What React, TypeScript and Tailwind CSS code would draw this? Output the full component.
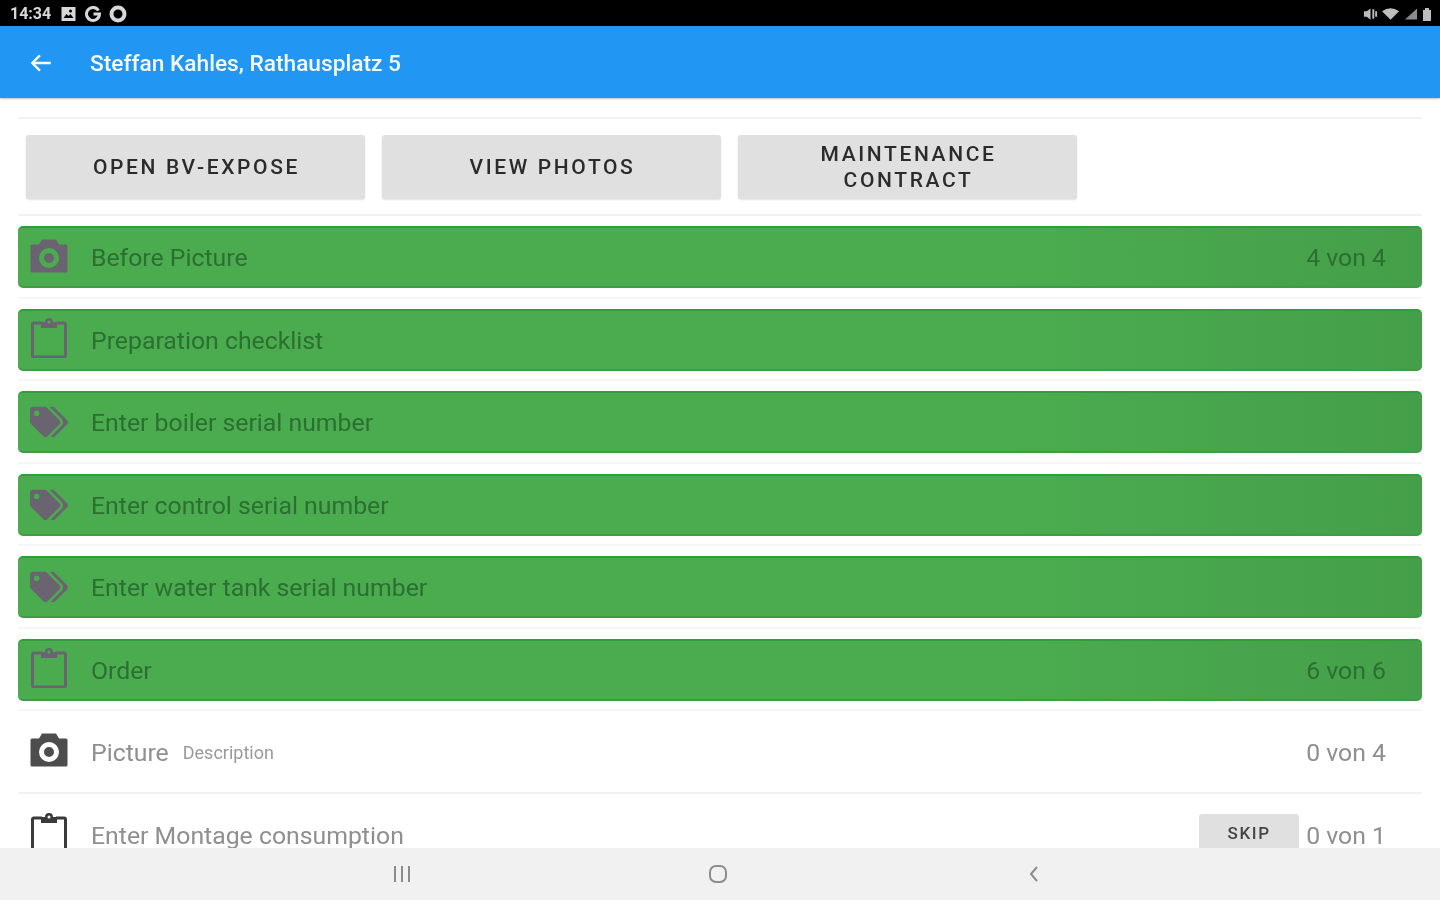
import React from "react";
import { FaTags } from "react-icons/fa";

const Camera = ({ className }: { className: string }) => (
  <svg viewBox="0 0 38 34" className={className} aria-hidden="true">
    <path
      fillRule="evenodd"
      fill="currentColor"
      d="M12 0.5h14l3 5h7a1.5 1.5 0 0 1 1.5 1.5v25a1.5 1.5 0 0 1-1.5 1.5H2A1.5 1.5 0 0 1 .5 32V7A1.5 1.5 0 0 1 2 5.5h7zM19 9a10 10 0 1 0 0 20a10 10 0 0 0 0-20zm0 5a5 5 0 1 1 0 10a5 5 0 0 1 0-10z"
    />
  </svg>
);

const Clipboard = ({ className }: { className: string }) => (
  <svg viewBox="0 0 36 40" className={className} fill="none" aria-hidden="true">
    <path d="M11 5H3a1.5 1.5 0 0 0-1.5 1.5v31A1.5 1.5 0 0 0 3 39h30a1.5 1.5 0 0 0 1.5-1.5v-31A1.5 1.5 0 0 0 33 5h-8" stroke="currentColor" strokeWidth="3" />
    <path fillRule="evenodd" fill="currentColor" d="M14 4a4 4 0 0 1 8 0h4v6H10V4zM18 2.5a1.5 1.5 0 1 0 0 3a1.5 1.5 0 0 0 0-3z" />
  </svg>
);

const Tags = ({ className }: { className: string }) => <FaTags className={className} />;

type Row = { icon: "camera" | "clip" | "tag"; label: string; count?: string };

const greenRows: Row[] = [
  { icon: "camera", label: "Before Picture", count: "4 von 4" },
  { icon: "clip", label: "Preparation checklist" },
  { icon: "tag", label: "Enter boiler serial number" },
  { icon: "tag", label: "Enter control serial number" },
  { icon: "tag", label: "Enter water tank serial number" },
  { icon: "clip", label: "Order", count: "6 von 6" },
];

const RowIcon = ({ icon, tone }: { icon: Row["icon"]; tone: string }) => (
  <div className={`flex h-[40px] w-[38px] shrink-0 items-center justify-center ${tone}`}>
    {icon === "camera" && <Camera className="mb-[2px] h-[34px] w-[38px]" />}
    {icon === "clip" && <Clipboard className="mb-[3px] h-[40px] w-[36px]" />}
    {icon === "tag" && <Tags className="h-[38px] w-[38px]" />}
  </div>
);

const Btn = ({ children }: { children: React.ReactNode }) => (
  <button className="flex h-[64px] w-[339px] items-center justify-center rounded-[3px] bg-[#e0e0e0] pl-[2px] text-center text-[21px] font-medium uppercase leading-[26px] tracking-[0.125em] text-[#2b2b2b] shadow-[0_1px_2px_rgba(0,0,0,0.12)]">
    {children}
  </button>
);

export default function App() {
  return (
    <div className="flex h-[900px] w-[1440px] flex-col overflow-hidden bg-white font-['Roboto',sans-serif] blur-[0.7px]">
      {/* status bar */}
      <div className="flex h-[26px] shrink-0 items-center justify-between bg-black pl-[10px] pr-[8px] pt-[2px] text-[#d8d8d8]">
        <div className="flex items-center gap-[8px]">
          <span className="w-[42px] whitespace-nowrap text-[16px] font-bold">14:34</span>
          <svg viewBox="0 0 16 16" className="h-[16px] w-[17px]" aria-hidden="true">
            <path fill="currentColor" fillRule="evenodd" d="M1 1h14v14H1zM3 12h10l-3-4-2 2-2-2zM10 3.5a1.5 1.5 0 1 0 0 3a1.5 1.5 0 0 0 0-3z" />
          </svg>
          <svg viewBox="0 0 16 16" className="h-[16px] w-[16px]" aria-hidden="true">
            <path fill="none" stroke="currentColor" strokeWidth="3" d="M13.5 4.5A6.5 6.5 0 1 0 14.5 8H8.5" />
          </svg>
          <svg viewBox="0 0 18 18" className="h-[18px] w-[18px]" aria-hidden="true">
            <circle cx="9" cy="9" r="6.5" fill="none" stroke="currentColor" strokeWidth="4" />
          </svg>
        </div>
        <div className="flex items-center gap-[4px] text-[#bdbdbd]">
          <svg viewBox="0 0 16 14" className="h-[14px] w-[15px]" aria-hidden="true">
            <path fill="currentColor" d="M1 4h3l4-3v12l-4-3H1zM10 2h2v10h-2zM13 4h2v6h-2z" />
          </svg>
          <svg viewBox="0 0 20 14" className="h-[14px] w-[19px]" aria-hidden="true">
            <path fill="currentColor" d="M0 4Q9-2 18 4L9 13z" />
          </svg>
          <svg viewBox="0 0 14 14" className="h-[14px] w-[13px]" aria-hidden="true">
            <path fill="#8a8a8a" d="M0 13L13 1v12z" />
          </svg>
          <svg viewBox="0 0 10 14" className="h-[14px] w-[10px]" aria-hidden="true">
            <path fill="currentColor" d="M3 1h4v2h2v11H1V3h2z" />
          </svg>
        </div>
      </div>

      {/* app bar */}
      <header className="flex h-[72px] shrink-0 items-center bg-[#2196f3] shadow-[0_1px_2px_rgba(0,0,0,0.25)]">
        <svg viewBox="0 0 24 24" className="ml-[28px] mt-[2px] h-[26px] w-[26px] text-white" aria-hidden="true">
          <path fill="none" stroke="currentColor" strokeWidth="2.2" d="M21 12H4M11 5l-7 7 7 7" />
        </svg>
        <h1 className="ml-[36px] pt-[4px] text-[22.7px] font-medium text-[#f4faff]">Steffan Kahles, Rathausplatz 5</h1>
      </header>

      {/* content */}
      <main className="min-h-0 flex-1 overflow-hidden px-[18px] pt-[19px]">
        <div className="h-[99px] border-y-2 border-[#f2f2f2] px-[8px] pt-[16px]">
          <div className="flex gap-[17px]">
            <Btn>Open BV-Expose</Btn>
            <Btn>View photos</Btn>
            <Btn>
              Maintenance
              <br />
              contract
            </Btn>
          </div>
        </div>

        {greenRows.map((r, i) => (
          <div key={i} className="h-[82.5px] border-b-2 border-[#f6f6f6] pt-[10px]">
            <div className="flex h-[62px] items-center rounded-[5px] border-t-2 border-b-2 border-t-[#2e9e38] border-b-[#3f9c44] bg-gradient-to-r from-[#4bac4f] from-70% to-[#459f4a] pl-[12px] pr-[36px] text-[24.8px] text-[#2b6f31]">
              <RowIcon icon={r.icon} tone="text-[#6a6370]" />
              <span className="ml-[23px] flex-1 pt-[2px]">{r.label}</span>
              {r.count && <span className="pt-[2px]">{r.count}</span>}
            </div>
          </div>
        ))}

        <div className="flex h-[82.5px] items-center border-b-2 border-[#f2f2f2] pl-[12px] pr-[36px] text-[24.8px] text-[#8f8f8f]">
          <RowIcon icon="camera" tone="text-[#4d4d4d]" />
          <span className="ml-[23px] pt-[2px]">Picture</span>
          <span className="ml-[14px] flex-1 pt-[2px] text-[18px] text-[#9a9a9a]">Description</span>
          <span className="pt-[2px]">0 von 4</span>
        </div>

        <div className="flex h-[82px] items-center pl-[12px] pr-[36px] text-[24.8px] text-[#8f8f8f]">
          <RowIcon icon="clip" tone="text-[#3a3a3a]" />
          <span className="ml-[23px] flex-1 pt-[2px]">Enter Montage consumption</span>
          <span className="mr-[7px] mt-[2px] flex h-[44px] w-[100px] items-center justify-center rounded-[3px] bg-[#e0e0e0] pb-[4px] text-[17px] font-medium tracking-[0.1em] text-[#444444]">SKIP</span>
          <span className="pt-[2px]">0 von 1</span>
        </div>
      </main>

      {/* navigation bar */}
      <nav className="flex h-[52px] shrink-0 items-center bg-[#f1f1f1] pl-[392px] text-[#8c8c8c]">
        <svg viewBox="0 0 20 16" className="h-[16px] w-[20px]" aria-hidden="true">
          <path stroke="currentColor" strokeWidth="2" d="M3 0v16M10 0v16M17 0v16" />
        </svg>
        <svg viewBox="0 0 20 20" className="ml-[296px] h-[20px] w-[20px]" aria-hidden="true">
          <rect x="2" y="2" width="16" height="16" rx="6" fill="none" stroke="currentColor" strokeWidth="2" />
        </svg>
        <svg viewBox="0 0 12 18" className="ml-[300px] h-[18px] w-[12px]" aria-hidden="true">
          <path fill="none" stroke="currentColor" strokeWidth="2" d="M9 2L3 9l6 7" />
        </svg>
      </nav>
    </div>
  );
}
